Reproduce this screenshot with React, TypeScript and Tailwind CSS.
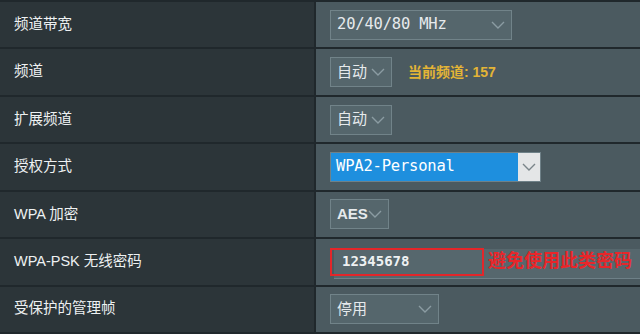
const Chevron = ({ className = '' }: { className?: string }) => (
  <svg width="14" height="8" viewBox="0 0 14 8" fill="none" className={className}>
    <path d="M1 1l6 6 6-6" stroke="currentColor" strokeWidth="1.4" />
  </svg>
)

const Select = ({ value, width, mono = false, bold = false }: { value: string; width: string; mono?: boolean; bold?: boolean }) => (
  <div className={`${width} h-[30px] flex items-center justify-between pl-[6px] pr-[6px] bg-[#55666c] border border-[#718389] text-[#e6eaec]`}>
    <span
      className={
        mono
          ? "font-['DejaVu_Sans_Mono',monospace] text-[15.5px] tracking-[-0.2px]"
          : `font-['Liberation_Sans','Noto_Sans_CJK_SC',sans-serif] text-[15px] ${bold ? 'font-bold' : ''}`
      }
    >
      {value}
    </span>
    <Chevron className="text-[#8b9ca2]" />
  </div>
)

const Row = ({ label, children }: { label: string; children: React.ReactNode }) => (
  <div className="flex-1 flex border-b-2 border-[#20282c]">
    <div className="w-[316px] flex items-center pl-[14px] bg-[#2c3539] border-r-2 border-[#20282c] text-[#eef1f2] text-[14.5px] font-['Liberation_Sans','Noto_Sans_CJK_SC',sans-serif]">
      {label}
    </div>
    <div className="flex-1 flex items-center pl-[14px] bg-[#4b5a60]">{children}</div>
  </div>
)

export default function App() {
  return (
    <div className="w-[640px] h-[334px] flex flex-col border-t-2 border-[#20282c] overflow-hidden">
      <Row label="频道带宽">
        <Select value="20/40/80 MHz" width="w-[182px]" mono />
      </Row>
      <Row label="频道">
        <Select value="自动" width="w-[62px]" />
        <span className="ml-[16px] text-[#e3b436] font-bold text-[14px] font-['Liberation_Sans','Noto_Sans_CJK_SC',sans-serif]">
          当前频道: 157
        </span>
      </Row>
      <Row label="扩展频道">
        <Select value="自动" width="w-[62px]" />
      </Row>
      <Row label="授权方式">
        <div className="w-[211px] h-[30px] flex border border-[#6f8188]">
          <div className="flex-1 flex items-center pl-[5px] bg-[#1e8fde] text-white font-['DejaVu_Sans_Mono',monospace] text-[15.5px] tracking-[-0.2px]">
            WPA2-Personal
          </div>
          <div className="w-[22px] flex items-center justify-center bg-[#e4e6e7] text-[#7a8589]">
            <Chevron />
          </div>
        </div>
      </Row>
      <Row label="WPA 加密">
        <Select value="AES" width="w-[59px]" bold />
      </Row>
      <Row label="WPA-PSK 无线密码">
        <div className="relative flex-1 flex items-center h-[30px]">
          <div className="absolute left-[4px] right-0 top-[2px] bottom-[-2px] bg-[#56676d] border-b border-[#6e8087]" />
          <div className="relative w-[154px] h-[28px] flex items-center pl-[10px] border-2 border-[#e3262a] text-[#eef1f2] font-['DejaVu_Sans_Mono',monospace] font-bold text-[14px]">
            12345678
          </div>
          <span className="relative ml-[4px] text-[#e8262a] font-bold text-[18px] font-['Liberation_Sans','Noto_Sans_CJK_SC',sans-serif]">
            避免使用此类密码
          </span>
        </div>
      </Row>
      <Row label="受保护的管理帧">
        <Select value="停用" width="w-[109px]" />
      </Row>
    </div>
  )
}
